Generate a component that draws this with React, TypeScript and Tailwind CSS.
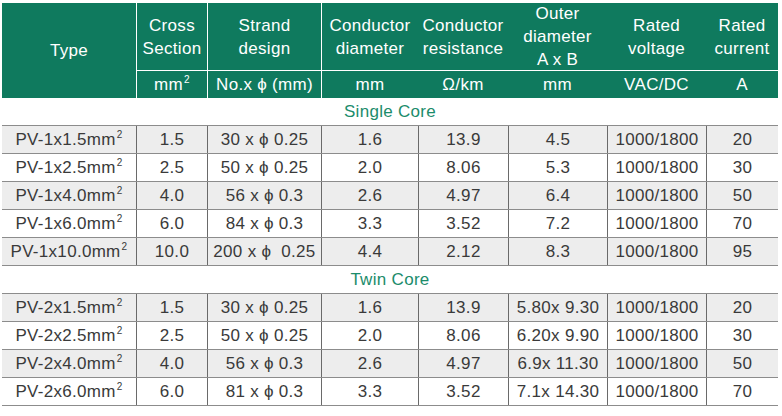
import React from 'react';

// 列宽：Type | Cross | Strand | Cond dia | Cond res | Outer | Voltage | Current
const cols = 'grid grid-cols-[134px_71px_114px_97px_90px_99px_99px_72px]';

interface Row {
  type: string;
  cross: string;
  strand: string;
  dia: string;
  res: string;
  outer: string;
  volt: string;
  amp: string;
}

const single: Row[] = [
  { type: 'PV-1x1.5mm', cross: '1.5', strand: '30 x ϕ 0.25', dia: '1.6', res: '13.9', outer: '4.5', volt: '1000/1800', amp: '20' },
  { type: 'PV-1x2.5mm', cross: '2.5', strand: '50 x ϕ 0.25', dia: '2.0', res: '8.06', outer: '5.3', volt: '1000/1800', amp: '30' },
  { type: 'PV-1x4.0mm', cross: '4.0', strand: '56 x ϕ 0.3', dia: '2.6', res: '4.97', outer: '6.4', volt: '1000/1800', amp: '50' },
  { type: 'PV-1x6.0mm', cross: '6.0', strand: '84 x ϕ 0.3', dia: '3.3', res: '3.52', outer: '7.2', volt: '1000/1800', amp: '70' },
  { type: 'PV-1x10.0mm', cross: '10.0', strand: '200 x ϕ  0.25', dia: '4.4', res: '2.12', outer: '8.3', volt: '1000/1800', amp: '95' },
];

const twin: Row[] = [
  { type: 'PV-2x1.5mm', cross: '1.5', strand: '30 x ϕ 0.25', dia: '1.6', res: '13.9', outer: '5.80x 9.30', volt: '1000/1800', amp: '20' },
  { type: 'PV-2x2.5mm', cross: '2.5', strand: '50 x ϕ 0.25', dia: '2.0', res: '8.06', outer: '6.20x 9.90', volt: '1000/1800', amp: '30' },
  { type: 'PV-2x4.0mm', cross: '4.0', strand: '56 x ϕ 0.3', dia: '2.6', res: '4.97', outer: '6.9x 11.30', volt: '1000/1800', amp: '50' },
  { type: 'PV-2x6.0mm', cross: '6.0', strand: '81 x ϕ 0.3', dia: '3.3', res: '3.52', outer: '7.1x 14.30', volt: '1000/1800', amp: '70' },
];

const Sup = () => <sup className="text-[10px] -top-[5px] ml-[1px]">2</sup>;

function Head({ lines, className = '' }: { lines: string[]; className?: string }) {
  return (
    <div className={`flex flex-col items-center justify-center leading-[23px] border-b border-white ${className}`}>
      {lines.map((l) => (
        <span key={l}>{l}</span>
      ))}
    </div>
  );
}

function Group({ label, rows }: { label: string; rows: Row[] }) {
  return (
    <>
      <div className="h-[27px] flex items-center justify-center text-[#1b8c6b]">{label}</div>
      <div className="border-t border-[#8c8c8c]">
        {rows.map((r, i) => (
          <div
            key={r.type}
            className={`${cols} h-[28px] border-b border-[#8c8c8c] ${i % 2 === 0 ? 'bg-[#ededed]' : 'bg-white'}`}
          >
            <div className="flex items-center justify-center">
              {r.type}
              <Sup />
            </div>
            <div className="flex items-center justify-center border-l border-[#6a6a6a]">{r.cross}</div>
            <div className="flex items-center justify-center border-l border-[#6a6a6a] whitespace-pre">{r.strand}</div>
            <div className="flex items-center justify-center border-l border-[#6a6a6a]">{r.dia}</div>
            <div className="flex items-center justify-center border-l border-[#6a6a6a]">{r.res}</div>
            <div className="flex items-center justify-center border-l border-[#6a6a6a]">{r.outer}</div>
            <div className="flex items-center justify-center border-l border-[#6a6a6a]">{r.volt}</div>
            <div className="flex items-center justify-center border-l border-[#6a6a6a]">{r.amp}</div>
          </div>
        ))}
      </div>
    </>
  );
}

export default function App() {
  return (
    <div className="w-[782px] h-[416px] bg-white pt-[3px] pl-[2px] font-['Liberation_Sans',Arial,sans-serif] text-[17px] tracking-[0.3px] text-[#3a3a3a]">
      <div className="w-[776px]">
        {/* 表头 */}
        <div className={`${cols} grid-rows-[68px_27px] bg-[#0f7a5e] text-white`}>
          <div className="row-span-2 flex items-center justify-center">Type</div>
          <Head lines={['Cross', 'Section']} className="border-l" />
          <Head lines={['Strand', 'design']} className="border-l" />
          <Head lines={['Conductor', 'diameter']} className="border-l" />
          <Head lines={['Conductor', 'resistance']} />
          <Head lines={['Outer', 'diameter', 'A x B']} />
          <Head lines={['Rated', 'voltage']} />
          <Head lines={['Rated', 'current']} />
          <div className="flex items-center justify-center border-l border-white">
            mm
            <Sup />
          </div>
          <div className="flex items-center justify-center border-l border-white">No.x ϕ (mm)</div>
          <div className="flex items-center justify-center border-l border-white">mm</div>
          <div className="flex items-center justify-center">Ω/km</div>
          <div className="flex items-center justify-center">mm</div>
          <div className="flex items-center justify-center">VAC/DC</div>
          <div className="flex items-center justify-center">A</div>
        </div>
        <Group label="Single Core" rows={single} />
        <Group label="Twin Core" rows={twin} />
      </div>
    </div>
  );
}
